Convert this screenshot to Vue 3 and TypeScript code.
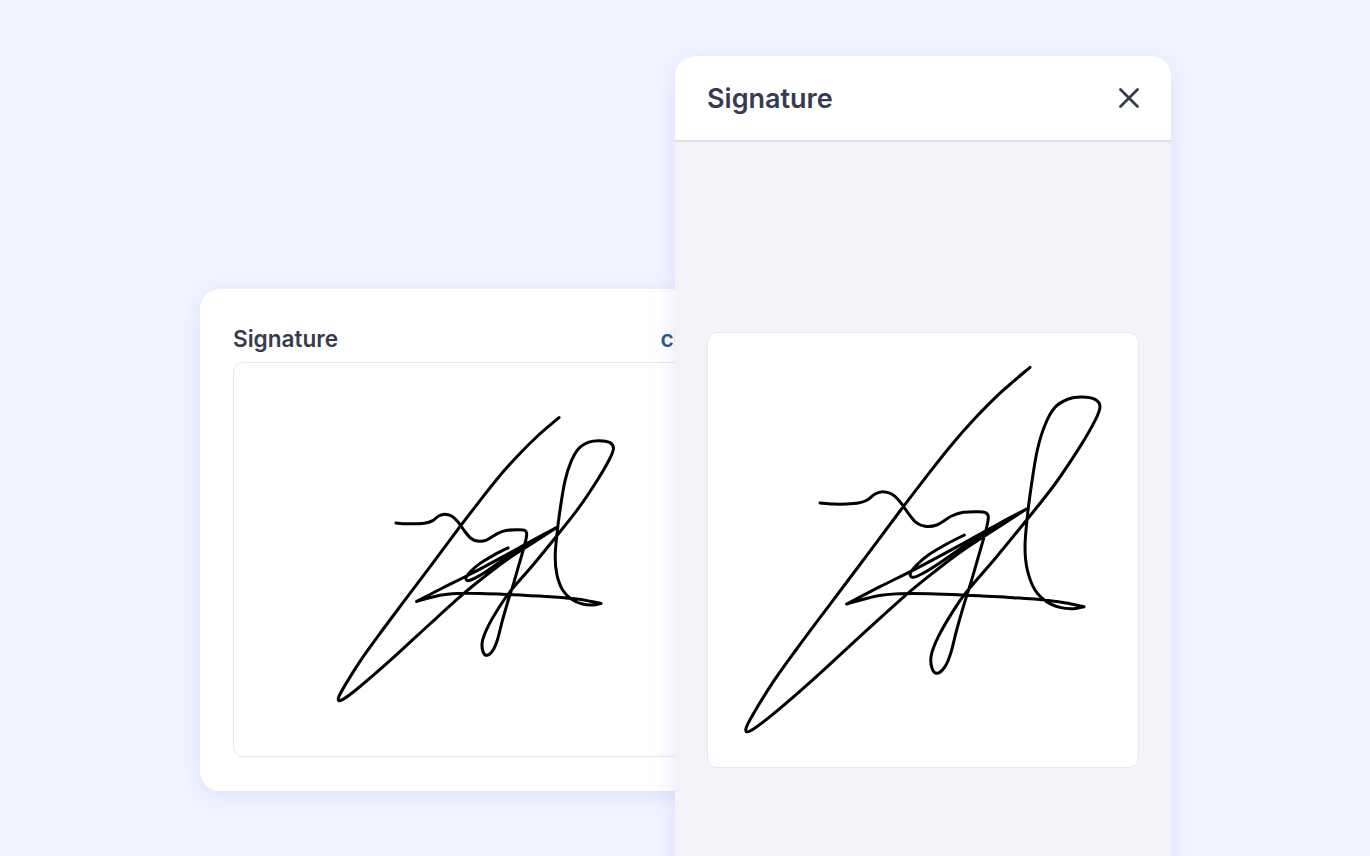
<script setup lang="ts">
type P = [number, number]
const strokes: P[][] = [
  [[270,459],[310,462],[350,462],[385,459],[412,450],[435,432],[458,425],[485,432],[510,455],[535,490],[558,517],[585,529],[620,525],[665,498],[700,487],[740,485],[765,487],[775,500],[768,540],[748,610],[725,690],[700,770],[680,840],[662,910],[645,950],[622,970],[606,955],[604,915],[625,860],[665,790],[710,725],[800,620],[890,510],[975,402],[1050,290],[1095,212],[1110,170],[1095,148],[1055,141],[1015,147],[975,172],[945,225],[922,300],[905,400],[892,500],[885,590],[892,660],[915,720],[950,755],[990,772],[1030,776],[1062,770]],
  [[1062,770],[1020,761],[960,752],[850,743],[700,735],[600,731],[510,731],[440,738],[350,762]],
  [[350,762],[450,710],[560,655],[700,580],[800,525],[888,478]],
  [[888,478],[800,535],[700,600],[620,660],[530,733],[400,850],[250,988],[120,1100],[60,1143],[48,1135],[72,1088],[130,995],[200,897],[300,763],[410,617],[510,483],[585,385],[660,290],[735,205],[815,125],[900,52]],
  [[888,478],[800,525],[700,590],[620,645],[575,672],[548,682],[541,670],[560,645],[595,615],[650,582],[703,555]]
]
function smooth(pts: P[]): string {
  let d = `M${pts[0][0]} ${pts[0][1]}`
  for (let i = 0; i < pts.length - 1; i++) {
    const p0 = pts[Math.max(i - 1, 0)]
    const p1 = pts[i]
    const p2 = pts[i + 1]
    const p3 = pts[Math.min(i + 2, pts.length - 1)]
    const c1x = p1[0] + (p2[0] - p0[0]) / 6
    const c1y = p1[1] + (p2[1] - p0[1]) / 6
    const c2x = p2[0] - (p3[0] - p1[0]) / 6
    const c2y = p2[1] - (p3[1] - p1[1]) / 6
    d += `C${c1x.toFixed(1)} ${c1y.toFixed(1)} ${c2x.toFixed(1)} ${c2y.toFixed(1)} ${p2[0]} ${p2[1]}`
  }
  return d
}
const signature = strokes.map(smooth).join('')
</script>

<template>
  <div class="stage">
    <section class="card">
      <div class="card-head">
        <span class="label">Signature</span>
        <span class="clear">clear</span>
      </div>
      <div class="sig-box sig-box-small">
        <svg class="sig sig-small" viewBox="0 0 1170 1200" fill="none">
          <path :d="signature" />
        </svg>
      </div>
    </section>
    <section class="panel">
      <header class="panel-head">
        <span class="title">Signature</span>
        <svg class="close" viewBox="0 0 20 20" fill="none">
          <path d="M1.5 1.5 18.5 18.5M18.5 1.5 1.5 18.5" />
        </svg>
      </header>
      <div class="panel-body">
        <div class="sig-box sig-box-large">
          <svg class="sig sig-large" viewBox="0 0 1170 1200" fill="none">
            <path :d="signature" />
          </svg>
        </div>
      </div>
    </section>
  </div>
</template>

<style>
html, body { margin: 0; background: #f1f5ff; }
</style>

<style scoped>
.stage {
  display: flex;
  align-items: flex-start;
  width: 1370px;
  height: 856px;
  padding-left: 200px;
  box-sizing: border-box;
  overflow: hidden;
  background: #f1f5ff;
  font-family: Inter, "Liberation Sans", sans-serif;
  color: #363c4f;
}
.card {
  flex: none;
  box-sizing: border-box;
  width: 548px;
  height: 502px;
  margin-top: 289px;
  padding: 33px 33px 34px;
  background: #fff;
  border-radius: 20px;
  box-shadow: 0 4px 24px rgba(110, 110, 245, 0.16);
}
.card-head {
  display: flex;
  justify-content: space-between;
  align-items: center;
  height: 34px;
  margin-bottom: 6px;
  font-size: 22.6px;
  font-weight: 600;
  line-height: 34px;
}
.clear { color: #2c5590; }
.sig-box {
  box-sizing: border-box;
  background: #fff;
  border: 1px solid #e7e7ef;
  border-radius: 10px;
}
.sig-box-small { height: 395px; }
.sig-box-large { height: 436px; }
.sig { display: block; }
.sig path {
  stroke: #000;
  stroke-linecap: round;
  stroke-linejoin: round;
  vector-effect: non-scaling-stroke;
  stroke-width: 3px;
}
.sig-small {
  width: 303px;
  height: 311px;
  margin: 41px 0 0 92px;
}
.sig-large {
  width: 390px;
  height: 400px;
  margin: 17px 0 0 22px;
}
.panel {
  flex: none;
  width: 496px;
  height: 900px;
  margin: 56px 0 0 -73px;
  background: #f3f3f9;
  border-radius: 20px 20px 0 0;
  box-shadow: 0 4px 24px rgba(110, 110, 245, 0.16);
}
.panel-head {
  display: flex;
  justify-content: space-between;
  align-items: center;
  box-sizing: border-box;
  height: 86px;
  padding: 0 32px;
  background: #fff;
  border-bottom: 2px solid #dfdeea;
  border-radius: 20px 20px 0 0;
}
.title {
  font-size: 27px;
  font-weight: 600;
}
.close {
  width: 20px;
  height: 20px;
}
.close path {
  stroke: #363c4f;
  stroke-width: 2.8px;
  stroke-linecap: round;
}
.panel-body { padding: 190px 32px 0; }
</style>
